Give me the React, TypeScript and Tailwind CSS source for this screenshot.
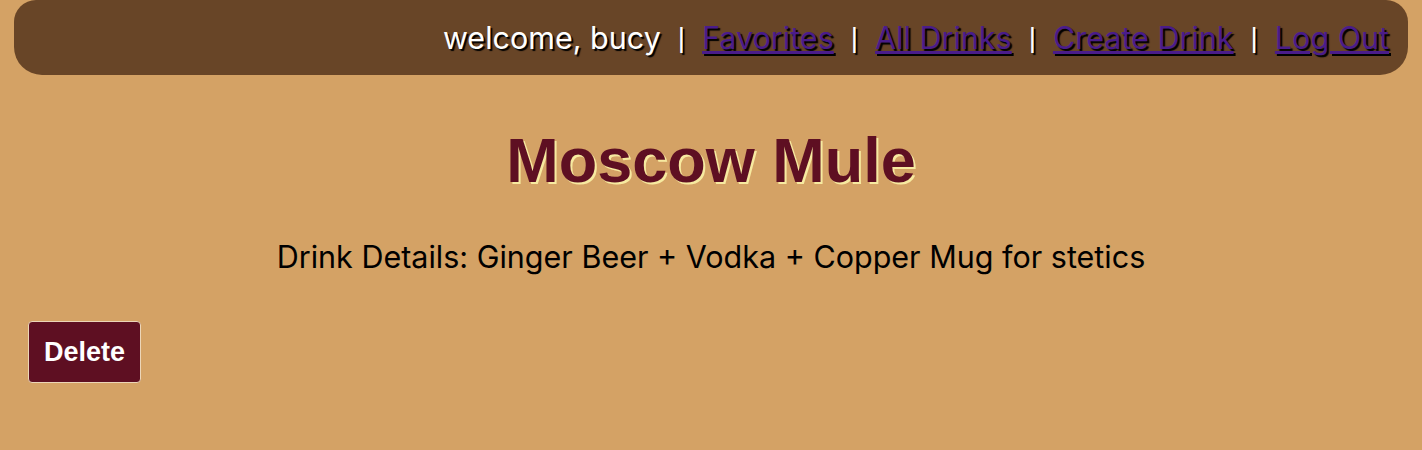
const links = ["Favorites", "All Drinks", "Create Drink", "Log Out"];

const App: React.FC = () => {
  return (
    <div className="min-h-[450px] bg-[#d4a265] px-[14px] font-['Inter',sans-serif]">
      <nav className="flex h-[75px] items-center justify-end rounded-b-[28px] rounded-t-[22px] bg-[#684527] pr-[19px] text-[30.5px] text-white [text-shadow:2px_2px_1px_#000]">
        <span>welcome, bucy</span>
        {links.map((label) => (
          <span key={label} className="flex items-center">
            <span className="mx-[17px] font-['Liberation_Sans',sans-serif] text-[28px]">|</span>
            <a href="#" className="text-[#4a1c8a] underline">
              {label}
            </a>
          </span>
        ))}
      </nav>

      <h1 className="mt-[50px] text-center font-['Liberation_Sans',sans-serif] text-[63px] font-bold leading-[70px] text-[#5e0f22] [text-shadow:2px_2px_0_#f7eaa0]">
        Moscow Mule
      </h1>

      <p className="mt-[44px] text-center text-[30.5px] leading-[36px] text-black">
        Drink Details: Ginger Beer + Vodka + Copper Mug for stetics
      </p>

      <button className="ml-[14px] mt-[46px] h-[62px] w-[113px] rounded-[4px] border border-[#ecd6b8] bg-[#5e0f22] font-['Liberation_Sans',sans-serif] text-[27px] font-bold text-white">
        Delete
      </button>
    </div>
  );
};

export default App;
